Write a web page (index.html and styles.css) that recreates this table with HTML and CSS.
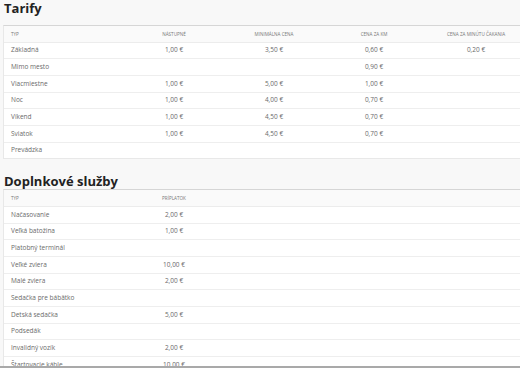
FILE: index.html
```html
<!DOCTYPE html>
<html lang="sk">
<head>
    <meta charset="UTF-8">
    <meta name="viewport" content="width=device-width, initial-scale=1.0">
    <title>Tarify</title>
    <link rel="stylesheet" href="styles.css">
</head>
<body>
    <h1 class="section-title">Tarify</h1>
    <div class="card">
        <table class="price-table">
            <colgroup>
                <col class="col-type">
                <col class="col-num">
                <col class="col-num">
                <col class="col-num">
                <col class="col-wide">
            </colgroup>
            <thead>
                <tr>
                    <th class="left">Typ</th>
                    <th>Nástupné</th>
                    <th>Minimálna cena</th>
                    <th>Cena za km</th>
                    <th>Cena za minútu čakania</th>
                </tr>
            </thead>
            <tbody>
                <tr><td class="left">Základná</td><td>1,00 €</td><td>3,50 €</td><td>0,60 €</td><td>0,20 €</td></tr>
                <tr><td class="left">Mimo mesto</td><td></td><td></td><td>0,90 €</td><td></td></tr>
                <tr><td class="left">Viacmiestne</td><td>1,00 €</td><td>5,00 €</td><td>1,00 €</td><td></td></tr>
                <tr><td class="left">Noc</td><td>1,00 €</td><td>4,00 €</td><td>0,70 €</td><td></td></tr>
                <tr><td class="left">Víkend</td><td>1,00 €</td><td>4,50 €</td><td>0,70 €</td><td></td></tr>
                <tr><td class="left">Sviatok</td><td>1,00 €</td><td>4,50 €</td><td>0,70 €</td><td></td></tr>
                <tr><td class="left">Prevádzka</td><td></td><td></td><td></td><td></td></tr>
            </tbody>
        </table>
    </div>

    <h2 class="section-title second">Doplnkové služby</h2>
    <div class="card">
        <table class="price-table">
            <colgroup>
                <col class="col-type">
                <col class="col-num">
                <col class="col-rest">
            </colgroup>
            <thead>
                <tr>
                    <th class="left">Typ</th>
                    <th>Príplatok</th>
                    <th></th>
                </tr>
            </thead>
            <tbody>
                <tr><td class="left">Načasovanie</td><td>2,00 €</td><td></td></tr>
                <tr><td class="left">Veľká batožina</td><td>1,00 €</td><td></td></tr>
                <tr><td class="left">Platobný terminál</td><td></td><td></td></tr>
                <tr><td class="left">Veľké zviera</td><td>10,00 €</td><td></td></tr>
                <tr><td class="left">Malé zviera</td><td>2,00 €</td><td></td></tr>
                <tr><td class="left">Sedačka pre bábätko</td><td></td><td></td></tr>
                <tr><td class="left">Detská sedačka</td><td>5,00 €</td><td></td></tr>
                <tr><td class="left">Podsedák</td><td></td><td></td></tr>
                <tr><td class="left">Invalidný vozík</td><td>2,00 €</td><td></td></tr>
                <tr><td class="left">Štartovacie káble</td><td>10,00 €</td><td></td></tr>
            </tbody>
        </table>
    </div>

    <div class="window-edge"></div>
</body>
</html>
```

FILE: styles.css
```css
html, body {
    overflow: hidden;
}
body {
    font-family: 'Open Sans', 'Noto Sans', sans-serif;
    margin: 0;
    padding: 0 0 0 4px;
    background: #f8f8f8;
    color: #666;
}
.section-title {
    font-size: 13px;
    line-height: 16px;
    font-weight: 700;
    color: #222;
    margin: 0 0 9px;
}
.section-title.second {
    margin: 14px 0 0;
}
.card {
    width: 526px;
    margin-left: -1px;
    background: #fff;
    border: 1px solid #e8e8e8;
    border-top: 1px solid #d6d6d6;
    border-right: none;
}
.price-table {
    width: 524px;
    border-collapse: collapse;
    table-layout: fixed;
}
.col-type {
    width: 120px;
}
.col-num {
    width: 100px;
}
.col-wide {
    width: 104px;
}
.price-table th,
.price-table td {
    padding: 0 7px;
    line-height: 8px;
    text-align: center;
    white-space: nowrap;
    overflow: hidden;
}
.price-table th {
    height: 15.5px;
    font-size: 4.6px;
    font-weight: 400;
    text-transform: uppercase;
    color: #777;
    background: #fafafa;
    border-bottom: 1.5px solid #ececec;
}
.price-table td {
    height: 15.7px;
    font-size: 6.5px;
    color: #6a6a6a;
    border-top: 1px solid #eeeeee;
}
.price-table tbody tr:first-child td {
    border-top: none;
}
.price-table .left {
    text-align: left;
}
.window-edge {
    position: fixed;
    left: 0;
    right: 0;
    bottom: 0;
    height: 2px;
    background: #a9a9a9;
}
```
